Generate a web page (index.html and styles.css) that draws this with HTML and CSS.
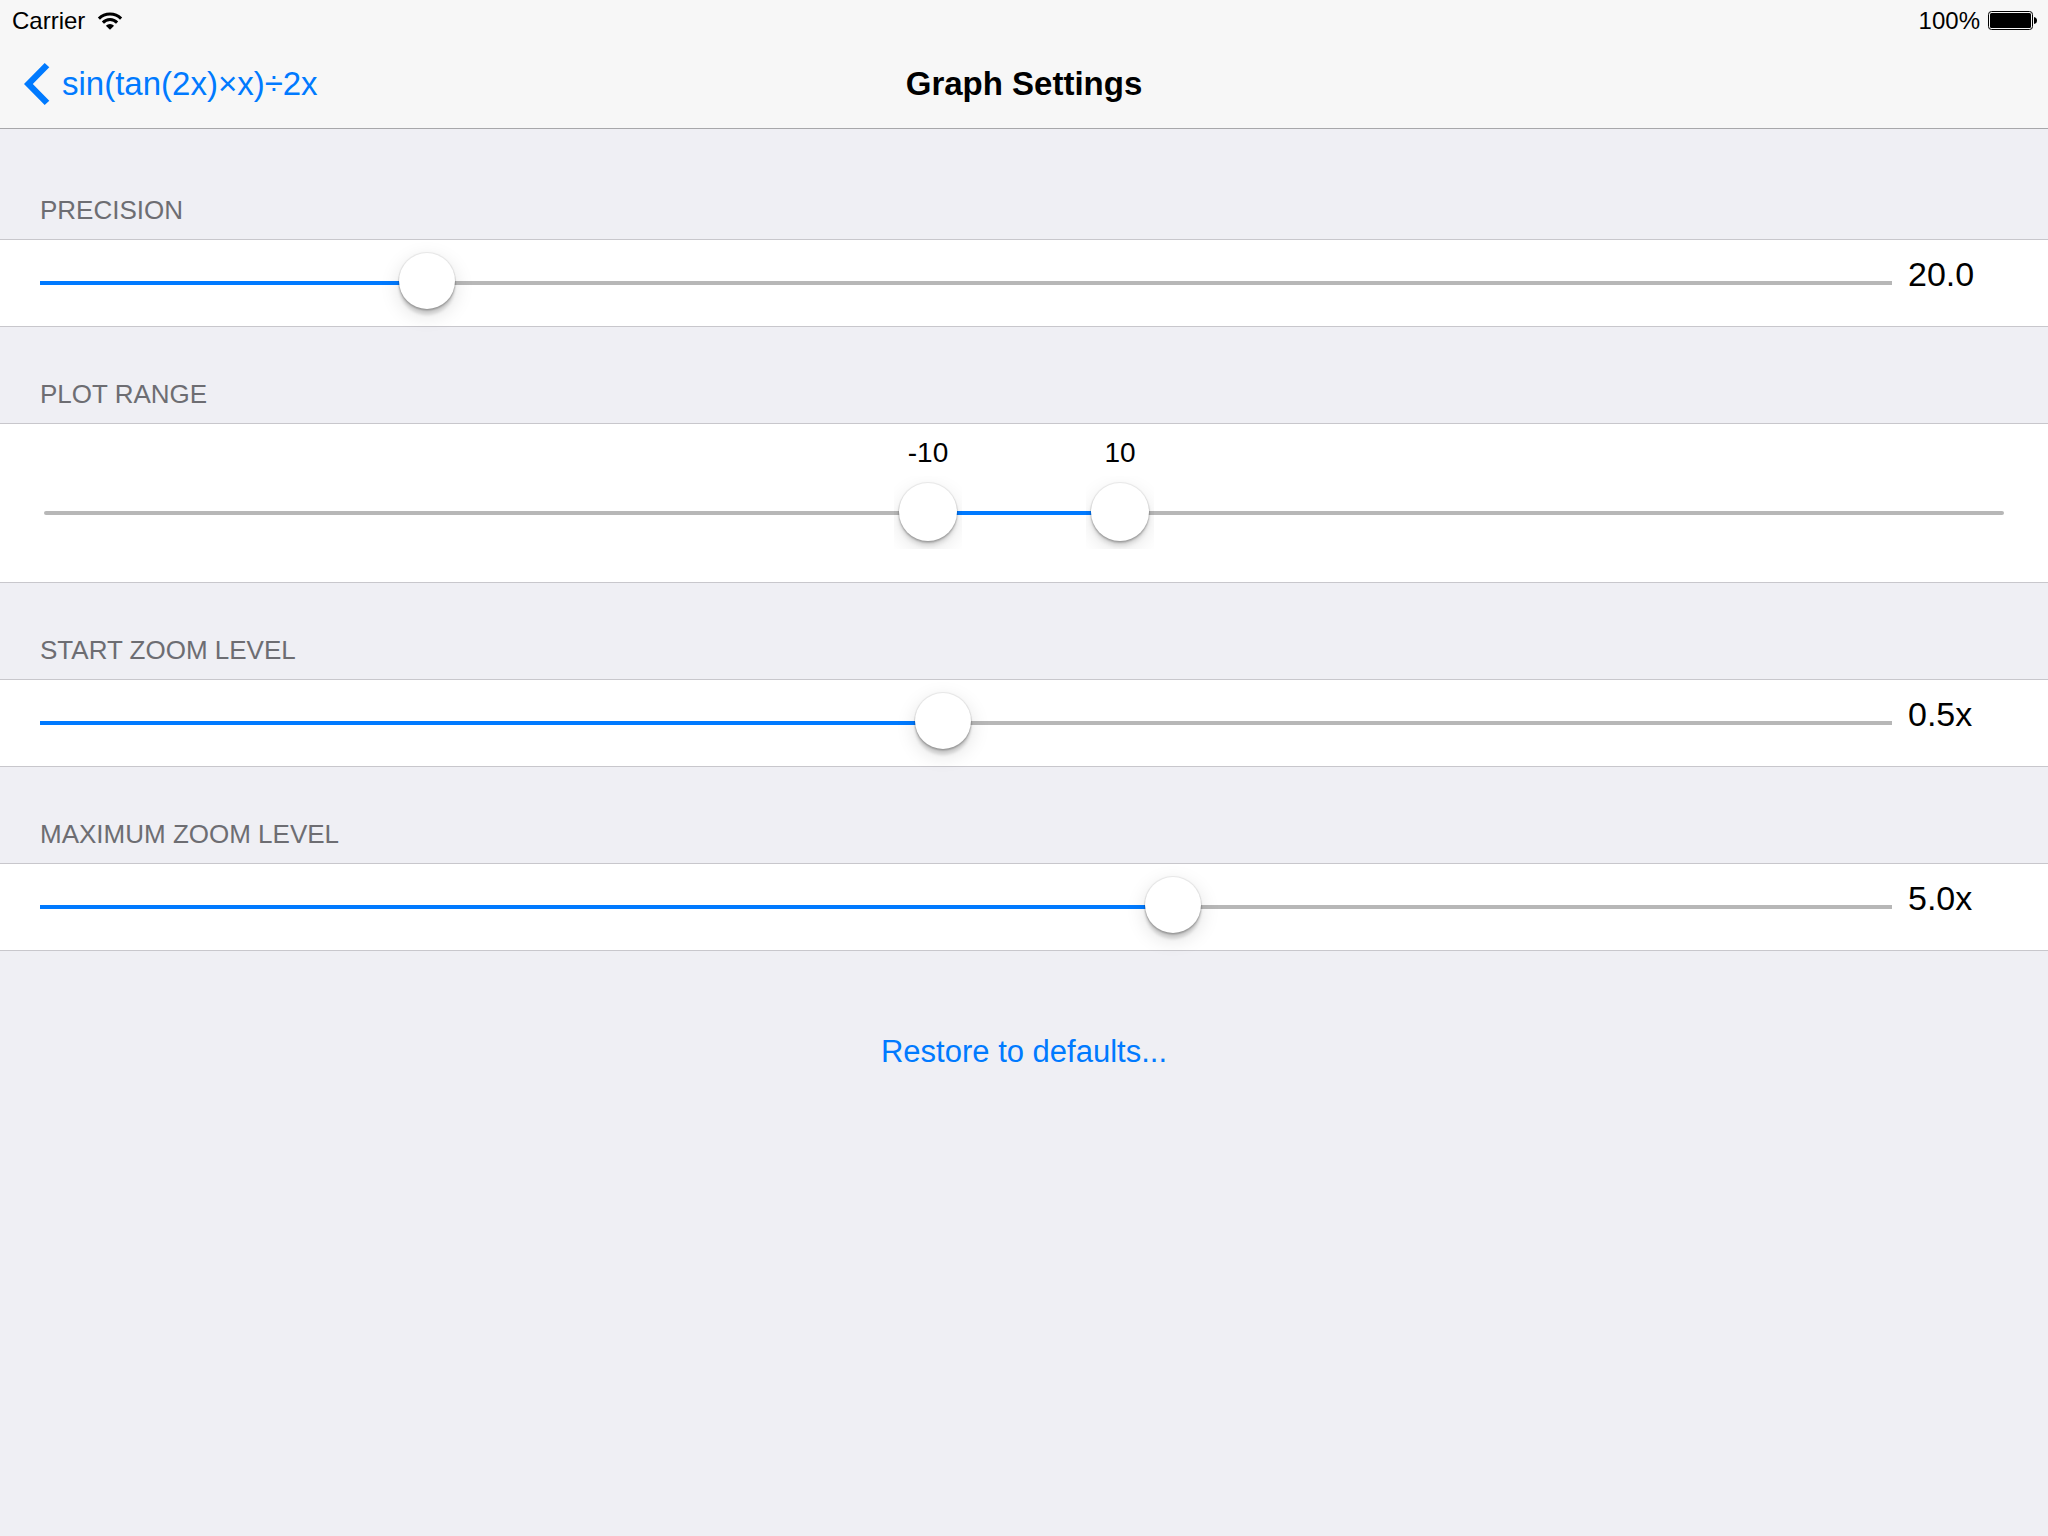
FILE: index.html
```
<!DOCTYPE html>
<html lang="en">
<head>
<meta charset="utf-8">
<meta name="viewport" content="width=device-width, initial-scale=1">
<title>Graph Settings</title>
<link rel="stylesheet" href="styles.css">
</head>
<body>
<header class="header">
  <div class="status">
    <div class="status-group">
      <span>Carrier</span>
      <svg class="wifi" viewBox="0 0 26 18" width="26" height="18" aria-hidden="true">
        <path d="M1.9 6.6A15.6 15.6 0 0 1 24.1 6.6M5.9 10.6A9.8 9.8 0 0 1 20.1 10.6" fill="none" stroke="#000" stroke-width="3"/>
        <path d="M13 17.8L8.9 13.7A5.8 5.8 0 0 1 17.1 13.7Z"/>
      </svg>
    </div>
    <div class="status-group">
      <span>100%</span>
      <svg class="battery" viewBox="0 0 50 19" width="50" height="19" aria-hidden="true">
        <rect x=".5" y=".5" width="44" height="18" rx="3" fill="none" stroke="#000"/>
        <rect x="2" y="2" width="41" height="15" rx="1.5"/>
        <path d="M46 6Q49 6.500 49 9.500T46 13Z"/>
      </svg>
    </div>
  </div>
  <nav class="nav">
    <a class="back" href="#">
      <svg viewBox="0 0 26 42" width="26" height="42" aria-hidden="true"><path d="M20.700 0L25.300 4.200L8.800 21L25.300 37.800L20.700 42L0 21Z" fill="currentColor"/></svg>
      <span>sin(tan(2x)×x)÷2x</span>
    </a>
    <h1 class="title">Graph Settings</h1>
  </nav>
</header>
<main class="settings">
  <section>
    <label class="label" for="precision">PRECISION</label>
    <div class="row">
      <input class="slider" id="precision" type="range" min="0" max="100" step="any" value="20" style="--fill:20%">
      <output class="value" for="precision">20.0</output>
    </div>
  </section>
  <section role="group" aria-labelledby="range-label">
    <h2 class="label" id="range-label">PLOT RANGE</h2>
    <div class="range-row" style="--from:45%;--to:55%">
      <div class="range-values">
        <output class="range-value from" for="range-from">-10</output>
        <output class="range-value to" for="range-to">10</output>
      </div>
      <div class="range">
        <input class="range-input" id="range-from" type="range" min="-100" max="100" value="-10" aria-label="Plot range start">
        <input class="range-input" id="range-to" type="range" min="-100" max="100" value="10" aria-label="Plot range end">
      </div>
    </div>
  </section>
  <section>
    <label class="label" for="start-zoom">START ZOOM LEVEL</label>
    <div class="row">
      <input class="slider" id="start-zoom" type="range" min="0.025" max="1" step="any" value="0.5" style="--fill:48.7%">
      <output class="value" for="start-zoom">0.5x</output>
    </div>
  </section>
  <section>
    <label class="label" for="max-zoom">MAXIMUM ZOOM LEVEL</label>
    <div class="row">
      <input class="slider" id="max-zoom" type="range" min="0.2" max="8" step="any" value="5" style="--fill:61.5%">
      <output class="value" for="max-zoom">5.0x</output>
    </div>
  </section>
  <button class="restore" type="button">Restore to defaults...</button>
</main>
</body>
</html>
```
FILE: styles.css
```
:root {
  --blue: #007aff;
  --track: #b7b7b7;
  --line: #c8c7cc;
}

* {
  box-sizing: border-box;
}

body {
  margin: 0;
  min-height: 100vh;
  background: #efeff4;
  color: #000;
  font-family: "Liberation Sans", Arial, sans-serif;
}

/* Status and navigation bars */
.header {
  background: #f7f7f7;
  border-bottom: 1px solid #a7a7aa;
}

.status {
  display: flex;
  justify-content: space-between;
  align-items: center;
  height: 40px;
  padding: 1px 10px 0 12px;
  font-size: 24px;
  line-height: 28px;
}

.status-group {
  display: flex;
  align-items: center;
  gap: 12px;
}

.status-group:last-child {
  gap: 8px;
}

.nav {
  display: grid;
  grid-template-columns: 1fr auto 1fr;
  align-items: center;
  height: 88px;
  padding: 0 24px;
}

.back {
  display: flex;
  align-items: center;
  gap: 12px;
  color: var(--blue);
  font-size: 33px;
  line-height: 40px;
  text-decoration: none;
}

.title {
  margin: 0;
  font-size: 33px;
  line-height: 40px;
}

/* Setting groups */
.settings {
  display: flex;
  flex-direction: column;
  padding-top: 14px;
}

.label {
  display: block;
  margin: 0;
  padding: 52px 40px 14px;
  color: #6d6d72;
  font-size: 26px;
  font-weight: 400;
  line-height: 30px;
}

.row,
.range-row {
  background: #fff;
  border: solid var(--line);
  border-width: 1px 0;
}

.row {
  display: flex;
  align-items: center;
  gap: 16px;
  height: 88px;
  padding: 0 40px;
}

.value {
  flex: 0 0 100px;
  padding-bottom: 18px;
  font-size: 34px;
  line-height: 40px;
}

.slider {
  flex: 1;
  min-width: 0;
  height: 56px;
  margin: 0;
  appearance: none;
  border-radius: 2px;
  background:
    linear-gradient(to right, var(--blue) var(--fill), var(--track) var(--fill))
    center / 100% 4px no-repeat;
}

.slider::-webkit-slider-runnable-track {
  height: 56px;
}

.slider::-webkit-slider-thumb {
  appearance: none;
  width: 56px;
  height: 56px;
  margin-top: -2px;
  border-radius: 50%;
  background: #fff;
  box-shadow:
    0 0 1px 1px rgba(0, 0, 0, .08),
    0 2px 2px rgba(0, 0, 0, .2),
    0 6px 3px rgba(0, 0, 0, .12),
    0 6px 20px rgba(0, 0, 0, .13);
}

/* Slider with two thumbs */
.range-row {
  padding: 13px 35px 40px;
}

.range-values {
  position: relative;
  height: 32px;
  margin: 0 29px 15px;
}

.range-value {
  position: absolute;
  transform: translateX(-50%);
  font-size: 28px;
  line-height: 32px;
}

.from {
  left: var(--from);
}

.to {
  left: var(--to);
}

.range {
  display: grid;
  align-items: center;
}

.range::before {
  content: "";
  grid-area: 1 / 1;
  height: 4px;
  margin: 0 9px;
  border-radius: 2px;
  background: linear-gradient(
    to right,
    var(--track) var(--from),
    var(--blue) var(--from) var(--to),
    var(--track) var(--to)
  );
}

.range-input {
  grid-area: 1 / 1;
  width: 100%;
  height: 58px;
  margin: 0;
  appearance: none;
  background: none;
  pointer-events: none;
}

.range-input::-webkit-slider-runnable-track {
  height: 58px;
}

.range-input::-webkit-slider-thumb {
  appearance: none;
  width: 58px;
  height: 58px;
  margin-top: -1px;
  border-radius: 50%;
  background: #fff;
  box-shadow:
    0 0 1px 1px rgba(0, 0, 0, .08),
    0 2px 2px rgba(0, 0, 0, .2),
    0 5px 4px rgba(0, 0, 0, .1),
    0 7px 20px 1px rgba(0, 0, 0, .1);
  clip-path: inset(-7px -5px -8px);
  pointer-events: auto;
}

.restore {
  align-self: center;
  margin-top: 83px;
  padding: 0;
  border: 0;
  background: none;
  color: var(--blue);
  font: 31px/36px "Liberation Sans", Arial, sans-serif;
}
```
